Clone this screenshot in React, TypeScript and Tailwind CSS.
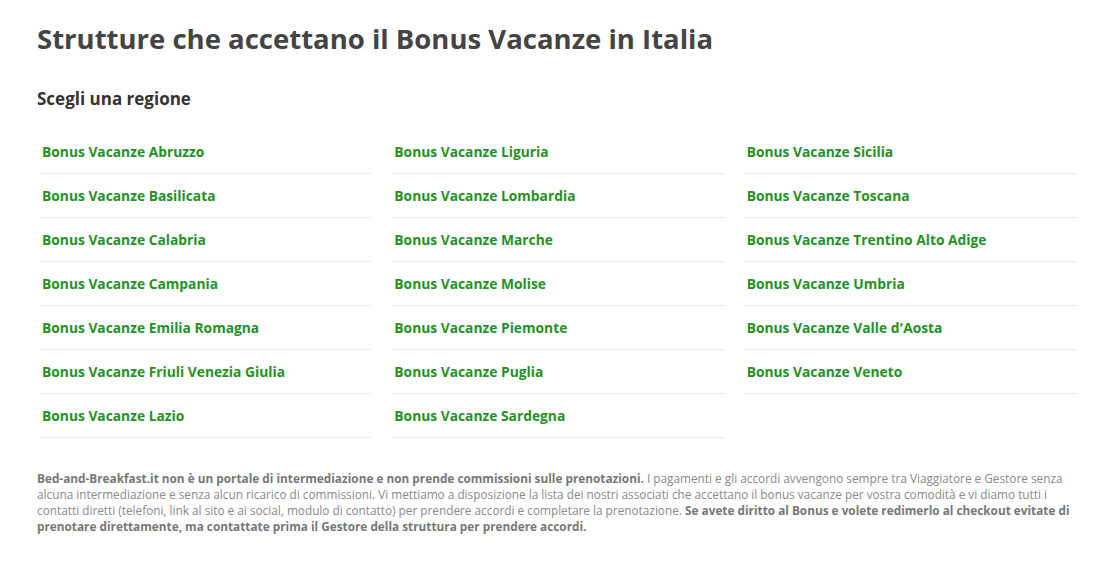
const columns: string[][] = [
  ['Abruzzo', 'Basilicata', 'Calabria', 'Campania', 'Emilia Romagna', 'Friuli Venezia Giulia', 'Lazio'],
  ['Liguria', 'Lombardia', 'Marche', 'Molise', 'Piemonte', 'Puglia', 'Sardegna'],
  ['Sicilia', 'Toscana', 'Trentino Alto Adige', 'Umbria', "Valle d'Aosta", 'Veneto'],
]

export default function App() {
  return (
    <div className="min-h-[561px] bg-white pl-[37px] pr-[24px] pt-[22px] font-['Open_Sans',sans-serif]">
      <h1 className="text-[27.5px] font-bold leading-[34px] text-[#444]">
        Strutture che accettano il Bonus Vacanze in Italia
      </h1>
      <h2 className="mt-[32px] text-[17px] font-bold leading-[22px] text-[#333]">Scegli una regione</h2>

      {/* region list */}
      <div className="ml-[3px] mt-[20px] grid grid-cols-3 gap-x-[21px]">
        {columns.map((col, i) => (
          <ul key={i}>
            {col.map((name) => (
              <li key={name} className="border-b border-[#ececec] px-[2px] py-[12px] text-[13.8px] leading-[19px]">
                <a href="#" className="font-bold text-[#24921f]">
                  Bonus Vacanze {name}
                </a>
              </li>
            ))}
          </ul>
        ))}
      </div>

      <p className="mt-[32px] pr-[4px] text-[11.8px] leading-[16px] text-[#8a8a8a]">
        <b className="font-bold text-[#777]">
          Bed-and-Breakfast.it non è un portale di intermediazione e non prende commissioni sulle prenotazioni.
        </b>{' '}
        I pagamenti e gli accordi avvengono sempre tra Viaggiatore e Gestore senza alcuna intermediazione e senza alcun
        ricarico di commissioni. Vi mettiamo a disposizione la lista dei nostri associati che accettano il bonus vacanze
        per vostra comodità e vi diamo tutti i contatti diretti (telefoni, link al sito e ai social, modulo di contatto)
        per prendere accordi e completare la prenotazione.{' '}
        <b className="font-bold text-[#777]">
          Se avete diritto al Bonus e volete redimerlo al checkout evitate di prenotare direttamente, ma contattate prima
          il Gestore della struttura per prendere accordi.
        </b>
      </p>
    </div>
  )
}
